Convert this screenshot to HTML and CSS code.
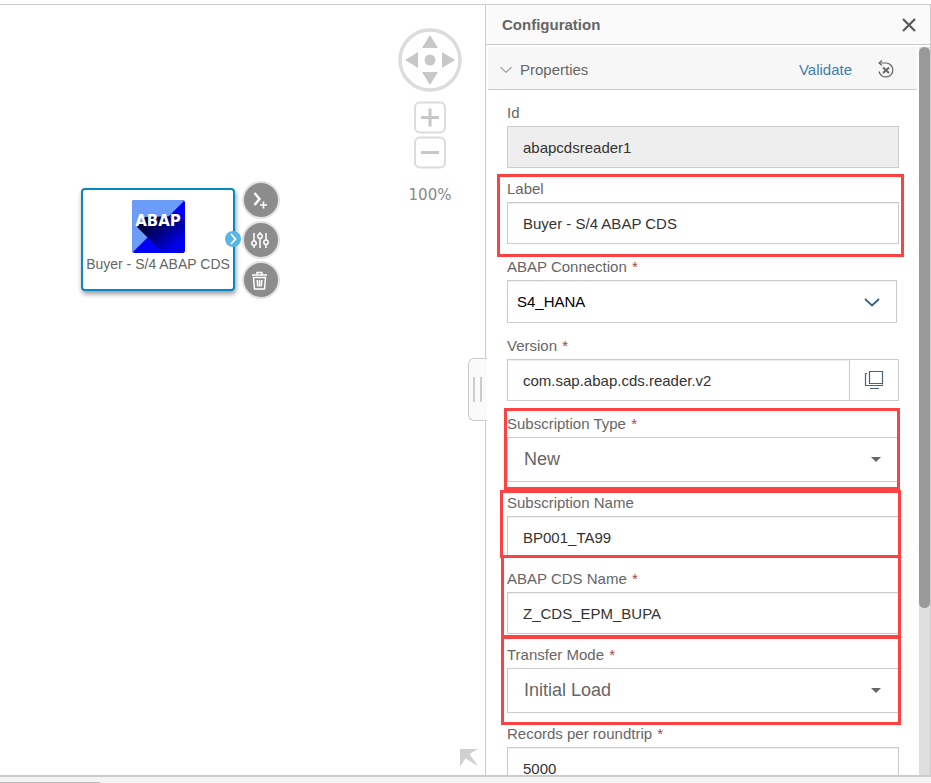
FILE: index.html
```html
<!DOCTYPE html>
<html lang="en">
<head>
<meta charset="utf-8">
<title>Pipeline Modeler</title>
<link rel="stylesheet" href="styles.css">
</head>
<body>
<div class="app">
  <main class="canvas">
    <div class="navigator">
      <button class="icon-button" type="button" aria-label="Pan">
        <svg width="64" height="64" viewBox="0 0 64 64"><circle cx="32" cy="32" r="30" fill="#fff" stroke="#dcdcdc" stroke-width="3.500"/><g fill="#c8c8c8"><circle cx="32" cy="32" r="5.500"/><path d="M32 7l8 13H24zM32 57l8-13H24zM7 32l13-8v16zM57 32l-13-8v16z"/></g></svg>
      </button>
      <div class="zoom">
        <button class="icon-button" type="button" aria-label="Zoom in">
          <svg width="32" height="33" viewBox="0 0 32 33"><rect x="1" y="1.500" width="30" height="30" rx="5" fill="#fff" stroke="#dcdcdc" stroke-width="2"/><path d="M7 16.500h18M16 7.500v18" stroke="#c8c8c8" stroke-width="3"/></svg>
        </button>
        <button class="icon-button" type="button" aria-label="Zoom out">
          <svg width="32" height="33" viewBox="0 0 32 33"><rect x="1" y="1.500" width="30" height="30" rx="5" fill="#fff" stroke="#dcdcdc" stroke-width="2"/><path d="M7 16.500h18" stroke="#c8c8c8" stroke-width="3"/></svg>
        </button>
      </div>
      <span class="zoom-level">100%</span>
    </div>

    <div class="node">
      <div class="node-icon">
        <svg width="53" height="53" viewBox="0 0 53 53"><defs><linearGradient id="shade" gradientUnits="userSpaceOnUse" x1="18" y1="16" x2="44" y2="46"><stop offset="0" stop-color="#000030"/><stop offset=".45" stop-color="#000078"/><stop offset="1" stop-color="#0000f0"/></linearGradient><clipPath id="tile"><rect width="53" height="53" rx="3"/></clipPath></defs><g clip-path="url(#tile)"><path fill="#0000fa" d="M0 0h53v53H0z"/><path fill="#6c9cfa" d="M0 0h53L0 53z"/><path fill="url(#shade)" d="M5 27l8-10 34-1 6 6v31H31z"/></g></svg>
        <span class="node-icon-text">ABAP</span>
      </div>
      <span class="node-label">Buyer - S/4 ABAP CDS</span>
      <span class="port"><svg width="16" height="16" viewBox="0 0 16 16"><circle cx="8" cy="8" r="8" fill="#58b6e6"/><path d="M6 3L10.500 8 6 13" fill="none" stroke="#fff" stroke-width="1.800"/></svg></span>
      <div class="node-actions">
        <button class="round" type="button" aria-label="Add port"><svg width="20" height="20" viewBox="0 0 20 20" fill="none" stroke="#fff"><path d="M3.500 3l5 6-5 6" stroke-width="2.400"/><path d="M9 15h7M12.500 11.500v7" stroke-width="1.600"/></svg></button>
        <button class="round" type="button" aria-label="Open configuration"><svg width="20" height="20" viewBox="0 0 20 20" fill="none" stroke="#fff" stroke-width="1.500"><path d="M3 3v8M3 15.500V18M9 2v2M9 8.500v9.500M15 3v7M15 14.500V18"/><circle cx="3" cy="13.300" r="2.200"/><circle cx="9" cy="6.300" r="2.200"/><circle cx="15" cy="12.300" r="2.200"/></svg></button>
        <button class="round" type="button" aria-label="Delete"><svg width="20" height="20" viewBox="0 0 20 20" fill="none" stroke="#fff" stroke-width="1.500"><path d="M1 5h15M6 4.500v-2h5v2M2.500 7.500h12l-1 11.500h-10zM6.200 10l.5 6.500M10.800 10l-.5 6.500M8.500 10v6.500"/></svg></button>
      </div>
    </div>

    <button class="icon-button overview" type="button" aria-label="Show overview">
      <svg width="18" height="18" viewBox="0 0 18 18"><path d="M0 0h18L9.500 5 18 17 5.500 9.500 0 17.500z" fill="#d0d0d0"/></svg>
    </button>
    <div class="splitter"><i></i><i></i></div>
  </main>

  <aside class="panel">
    <header class="panel-header">
      <h1>Configuration</h1>
      <button class="icon-button" type="button" aria-label="Close"><svg width="14" height="14" viewBox="0 0 14 14"><path d="M1 1l12 12M13 1L1 13" stroke="#5c5c5c" stroke-width="2.300"/></svg></button>
    </header>
    <div class="panel-body">
      <form class="content">
        <div class="section">
          <svg width="12" height="8" viewBox="0 0 12 8"><path d="M.5 1L6 6.500 11.500 1" fill="none" stroke="#666"/></svg>
          <h2>Properties</h2>
          <a href="#validate">Validate</a>
          <button class="icon-button" type="button" aria-label="Reset"><svg width="18" height="19" viewBox="0 0 18 19" fill="none" stroke="#666"><path d="M2.500 3h7a7 7 0 1 1-7.500 8.500" stroke-width="1.200"/><path d="M5 .5L2 3l3 2.500" stroke-width="1.200"/><path d="M6 7.500l6 5.500M12 7.500L6 13" stroke-width="1.900"/></svg></button>
        </div>
        <div class="fields">
          <div class="field"><label for="id">Id</label><input class="box" id="id" value="abapcdsreader1" readonly></div>
          <div class="field roomy mark mark-label"><label for="label">Label</label><input class="box" id="label" value="Buyer - S/4 ABAP CDS"></div>
          <div class="field roomy"><label for="connection">ABAP Connection <b>*</b></label>
            <div class="picker connection"><select class="box" id="connection"><option>S4_HANA</option></select><svg width="16" height="9" viewBox="0 0 16 9"><path d="M1 1l7 6.500L15 1" fill="none" stroke="#346187" stroke-width="1.800"/></svg></div></div>
          <div class="field roomy"><label for="version">Version <b>*</b></label>
            <div class="version"><input class="box" id="version" value="com.sap.abap.cds.reader.v2"><button class="box" type="button" aria-label="Choose version"><svg width="20" height="20" viewBox="0 0 20 20" fill="none" stroke="#49637e" stroke-width="1.200"><path d="M5.500 1.500h13v12h-13zM3 3.500H1.500v12h17V14.500M6 18.500h9"/></svg></button></div></div>
          <div class="field mark mark-type"><label for="type">Subscription Type <b>*</b></label>
            <div class="picker"><select class="box large" id="type"><option>New</option></select><svg width="10" height="5" viewBox="0 0 10 5"><path d="M0 0h10L5 5z" fill="#666"/></svg></div></div>
          <div class="field mark mark-name"><label for="name">Subscription Name</label><input class="box" id="name" value="BP001_TA99"></div>
          <div class="field mark mark-cds"><label for="cds">ABAP CDS Name <b>*</b></label><input class="box" id="cds" value="Z_CDS_EPM_BUPA"></div>
          <div class="field mark mark-mode"><label for="mode">Transfer Mode <b>*</b></label>
            <div class="picker"><select class="box large" id="mode"><option>Initial Load</option></select><svg width="10" height="5" viewBox="0 0 10 5"><path d="M0 0h10L5 5z" fill="#666"/></svg></div></div>
          <div class="field"><label for="records">Records per roundtrip <b>*</b></label><input class="box" id="records" value="5000"></div>
        </div>
      </form>
      <div class="scrollbar"><div class="thumb"></div></div>
    </div>
  </aside>
  <footer class="bottom"><div></div></footer>
</div>
</body>
</html>
```
FILE: styles.css
```css
* { box-sizing: border-box; }

body {
  margin: 0;
  font: 15px/20px "Liberation Sans", Arial, sans-serif;
  color: #666;
  background: #fff;
}

button, input, select { font: inherit; color: inherit; margin: 0; }
svg { display: block; }

.icon-button { padding: 0; border: 0; background: none; }

.app {
  display: grid;
  grid-template-columns: minmax(0, 1fr) 446px;
  grid-template-rows: minmax(0, 1fr) auto;
  height: 100vh;
  padding-top: 4px;
}

.canvas { position: relative; border-top: 1px solid #ccc; }

.navigator {
  position: absolute;
  top: 23px;
  right: 23px;
  display: flex;
  flex-direction: column;
  align-items: center;
  gap: 9px;
}

.zoom { display: flex; flex-direction: column; gap: 2px; }

.zoom-level {
  margin-top: 7px;
  font-family: "DejaVu Sans", Verdana, sans-serif;
  color: #888;
}

.node {
  position: absolute;
  top: 183px;
  left: 81px;
  width: 154px;
  height: 103px;
  padding-top: 10px;
  display: flex;
  flex-direction: column;
  align-items: center;
  border: 2px solid #0a86c2;
  border-radius: 4px;
  background: #fff;
  box-shadow: 1px 3px 5px #999;
}

.node-icon { position: relative; }

.node-icon-text {
  position: absolute;
  inset: 11px 0 auto;
  display: flex;
  justify-content: center;
  font: bold 15px/20px "DejaVu Sans", Verdana, sans-serif;
  color: #fff;
}

.node-label { font-size: 14px; line-height: 22px; white-space: nowrap; }

.port { position: absolute; top: 41px; right: -8px; }

.node-actions {
  position: absolute;
  top: -9px;
  left: 159px;
  display: grid;
  gap: 2px;
}

.round {
  display: grid;
  place-items: center;
  width: 38px;
  height: 38px;
  padding: 0;
  border: 2px solid #e2e2e2;
  border-radius: 50%;
  background: #8c8c8c;
}

.overview { position: absolute; right: 7px; bottom: 8px; }

.splitter {
  position: absolute;
  z-index: 1;
  top: 353px;
  right: -2px;
  display: flex;
  justify-content: center;
  gap: 5px;
  width: 19px;
  height: 63px;
  padding: 18px 2px 18px 0;
  border: 1px solid #ccc;
  border-right: 0;
  border-radius: 6px 0 0 6px;
  background: #fafafa;
}

.splitter i { width: 2px; background: #ccc; }

.panel {
  display: flex;
  flex-direction: column;
  min-height: 0;
  border: 1px solid #ccc;
  border-bottom: 0;
}

.panel-header {
  display: flex;
  align-items: center;
  justify-content: space-between;
  height: 40px;
  flex: none;
  padding: 0 14px 0 16px;
  border-bottom: 1px solid #ccc;
  background: #fafafa;
}

h1, h2 { margin: 0; font-size: 15px; }
h2 { flex: 1; font-weight: normal; }

.panel-body {
  flex: 1;
  display: flex;
  gap: 2px;
  min-height: 0;
  padding: 2px 0 0 2px;
}

.content { flex: 1; overflow: hidden; }

.section {
  display: flex;
  align-items: center;
  height: 43px;
  padding: 3px 22px 0 12px;
  border-bottom: 1px solid #ccc;
  background: #f7f7f7;
}

.section h2 { margin-left: 8px; }
.section a { margin-right: 25px; color: #427cac; text-decoration: none; }

.fields { padding: 16px 18px 0 19px; }

.field { position: relative; margin-bottom: 14px; }
.field.roomy { margin-bottom: 16px; }

label { display: block; padding-bottom: 6px; line-height: 14px; }
label b { margin-left: 1px; font-weight: normal; color: #a94442; }

.box {
  display: block;
  width: 100%;
  height: 42px;
  padding: 0 15px;
  border: 1px solid #ccc;
  border-radius: 0;
  outline: 0;
  background: #fff;
  color: #333;
  box-shadow: inset 0 1px 1px #eee;
  appearance: none;
}

.box[readonly] { background: #eee; }

.box.large {
  height: 45px;
  padding: 0 16px 2px;
  font-size: 18px;
  color: #666;
  box-shadow: none;
}

.picker { position: relative; }
.picker svg { position: absolute; top: 20px; right: 18px; pointer-events: none; }
.connection { margin-right: 2px; }
.connection .box { height: 43px; padding: 0 9px; color: #000; }
.connection svg { top: 18px; right: 17px; }

.version { display: flex; }
.version button { flex: 0 0 50px; margin-left: -1px; padding: 0 14px; box-shadow: none; }

/* Red frames that call out the fields to fill in */
.mark::after {
  content: "";
  position: absolute;
  z-index: 1;
  border: 3px solid #fc4242;
  pointer-events: none;
}

.mark-label::after { inset: -8px -5px -13px -10px; }
.mark-type::after { inset: -9px -1px -8px -3px; }
.mark-name::after { inset: -6px -2px 0 -7px; }
.mark-cds::after { inset: -17px -2px -4px -6px; }
.mark-mode::after { inset: -12px -2px -12px -6px; }

.scrollbar { width: 11px; background: #dedede; }
.thumb { height: 77%; border-radius: 6px; background: #999; }

.bottom {
  grid-column: 1 / -1;
  display: flex;
  align-items: flex-end;
  height: 8px;
  border-top: 2px solid #ccc;
  background: #f4f4f4;
}

.bottom div { width: 100px; height: 1px; background: #bbb; }
```
